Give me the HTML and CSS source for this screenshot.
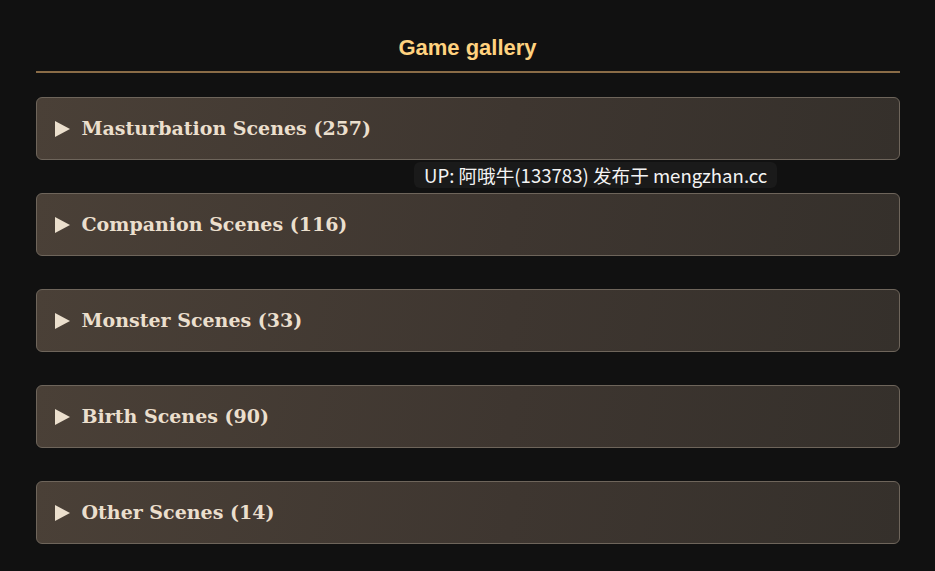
FILE: index.html
```html
<!DOCTYPE html>
<html lang="en">
<head>
    <meta charset="UTF-8">
    <meta name="viewport" content="width=device-width, initial-scale=1.0">
    <title>Game gallery</title>
    <link rel="stylesheet" href="styles.css">
</head>
<body>

    <div class="gallery">
        <h2 class="gallery-title">Game gallery</h2>

        <details class="scene-group">
            <summary>Masturbation Scenes (257)</summary>
        </details>

        <details class="scene-group">
            <summary>Companion Scenes (116)</summary>
        </details>

        <details class="scene-group">
            <summary>Monster Scenes (33)</summary>
        </details>

        <details class="scene-group">
            <summary>Birth Scenes (90)</summary>
        </details>

        <details class="scene-group">
            <summary>Other Scenes (14)</summary>
        </details>
    </div>

    <div class="watermark">UP: 阿哦牛(133783) 发布于 mengzhan.cc</div>

</body>
</html>
```

FILE: styles.css
```css
body {
    margin: 0;
    background-color: #111111;
    font-family: "DejaVu Serif", Georgia, serif;
    color: #ebdfcd;
}

.gallery {
    width: 864px;
    margin: 0 auto;
    padding-top: 35px;
}

.gallery-title {
    margin: 0 0 24px;
    padding-bottom: 10px;
    border-bottom: 2px solid #8a6c47;
    text-align: center;
    font-family: "Liberation Sans", Arial, sans-serif;
    font-size: 22px;
    color: #ffd27f; /* dorado */
}

.scene-group {
    margin-bottom: 33px;
    border: 1px solid #6e655b;
    border-radius: 6px;
    background: linear-gradient(100deg, #4a4037 0%, #3e3630 55%, #35302b 100%);
}

.scene-group summary {
    display: flex;
    align-items: center;
    gap: 12px;
    padding: 17px 18px;
    font-size: 19px;
    font-weight: bold;
    line-height: 27px;
    list-style: none;
    cursor: pointer;
}

.scene-group summary::-webkit-details-marker {
    display: none;
}

/* triángulo del desplegable */
.scene-group summary::before {
    content: "";
    width: 0;
    height: 0;
    border-top: 8.5px solid transparent;
    border-bottom: 8.5px solid transparent;
    border-left: 15px solid #ebdfcd;
}

.watermark {
    position: absolute;
    left: 414px;
    top: 162px;
    padding: 0 10px 1px;
    border-radius: 6px;
    background-color: #1a1a1a;
    color: #f4f4f4;
    font-family: "Noto Sans CJK SC", "Noto Sans", sans-serif;
    font-size: 18.6px;
    line-height: 25px;
}
```
